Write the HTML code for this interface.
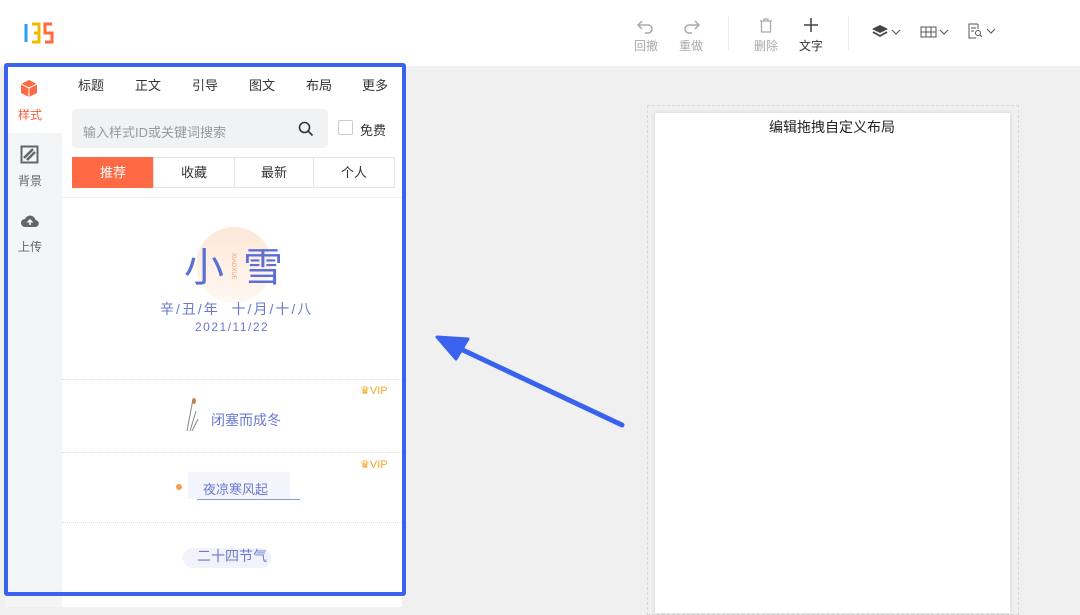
<!DOCTYPE html>
<html><head><meta charset="utf-8"><style>
*{margin:0;padding:0;box-sizing:border-box}
body{width:1080px;height:607px;overflow:hidden;background:#f0f0f0;font-family:"Liberation Sans","Noto Sans CJK SC",sans-serif;position:relative;font-size:13px;color:#333}
.top{position:absolute;left:0;top:0;width:1080px;height:66px;background:#fff}
.abs{position:absolute}
.tb{position:absolute;text-align:center;font-size:12px;color:#aaa;width:30px}
.side{position:absolute;left:6px;top:66px;width:56px;height:541px;background:#f4f5f7}
.panel{position:absolute;left:62px;top:66px;width:340px;height:541px;background:#fff}
.tabs span{position:absolute;top:75px;font-size:13px;color:#333}
.seg{position:absolute;top:157px;height:31px;border:1px solid #e3e3e3;text-align:center;line-height:29px;font-size:13px;color:#333}
.sep{position:absolute;left:62px;width:340px;border-top:1px dotted #e0e0e0}
.vip{position:absolute;left:360px;font-size:11px;color:#f5a623}
</style></head><body>
<div class="top"></div>
<svg class="abs" style="left:23px;top:22px" width="32" height="22" viewBox="0 0 32 22" fill="none" stroke-width="3"><path d="M3 2V20" stroke="#2a9df4"/><path d="M9 2H16V11H11M16 11V20H9" stroke="#f5b800"/><path d="M29 2H22V11H29V20H22" stroke="#ff6a3c"/></svg>
<!-- toolbar -->
<svg class="abs" style="left:636px;top:18px" width="20" height="16" viewBox="0 0 20 16" fill="none" stroke="#aaa" stroke-width="1.5"><path d="M6 3 L2 7 L6 11 M2 7 H12 a4 4 0 0 1 0 8 H9"/></svg>
<div class="tb" style="left:631px;top:37px">回撤</div>
<svg class="abs" style="left:681px;top:18px" width="20" height="16" viewBox="0 0 20 16" fill="none" stroke="#aaa" stroke-width="1.5"><path d="M14 3 L18 7 L14 11 M18 7 H8 a4 4 0 0 0 0 8 H11"/></svg>
<div class="tb" style="left:676px;top:37px">重做</div>
<div class="abs" style="left:728px;top:16px;width:1px;height:34px;background:#eee"></div>
<svg class="abs" style="left:758px;top:17px" width="16" height="17" viewBox="0 0 16 17" fill="none" stroke="#aaa" stroke-width="1.3"><path d="M2 4H14M6 4V2H10V4M3.5 4V15H12.5V4"/></svg>
<div class="tb" style="left:751px;top:37px">删除</div>
<svg class="abs" style="left:803px;top:17px" width="16" height="16" viewBox="0 0 16 16" stroke="#444" stroke-width="1.5"><path d="M8 1V15M1 8H15"/></svg>
<div class="tb" style="left:796px;top:37px;color:#333">文字</div>
<div class="abs" style="left:848px;top:16px;width:1px;height:34px;background:#eee"></div>
<svg class="abs" style="left:872px;top:24px" width="30" height="16" viewBox="0 0 30 16"><path d="M8 1L16 5L8 9L0 5Z" fill="#444"/><path d="M1 8L8 12L15 8" stroke="#444" stroke-width="1.8" fill="none"/><path d="M20 6L24 10L28 6" stroke="#555" fill="none"/></svg>
<svg class="abs" style="left:920px;top:25px" width="30" height="14" viewBox="0 0 30 14" fill="none" stroke="#555"><rect x="1" y="2" width="15" height="10"/><path d="M1 7H16M6 2V12M11 2V12M20 5L24 9L28 5"/></svg>
<svg class="abs" style="left:968px;top:23px" width="30" height="16" viewBox="0 0 30 16" fill="none" stroke="#555"><path d="M10 1H1V15H8M10 1V6M3 5H8M3 8H6"/><circle cx="10" cy="10" r="2.5"/><path d="M12 12L14 14M19 6L23 10L27 6"/></svg>
<!-- canvas -->
<div class="abs" style="left:647px;top:105px;width:372px;height:510px;border:1px dashed #d8d8d8"></div>
<div class="abs" style="left:655px;top:113px;width:355px;height:500px;background:#fff;box-shadow:0 0 4px rgba(0,0,0,.15)"></div>
<div class="abs" style="left:655px;top:117px;width:300px;text-align:center;font-size:14px;color:#222;left:682px">编辑拖拽自定义布局</div>
<!-- left -->
<div class="side"></div>
<div class="abs" style="left:6px;top:66px;width:56px;height:67px;background:#fff"></div>
<svg class="abs" style="left:20px;top:79px" width="18" height="19" viewBox="0 0 18 19"><path d="M9 1L17 5V14L9 18L1 14V5Z" fill="#ff6a45"/><path d="M1 5L9 9L17 5M9 9V18" stroke="#fff" stroke-width="1" fill="none"/></svg>
<div class="abs" style="left:18px;top:106px;font-size:12px;color:#ff5a3c">样式</div>
<svg class="abs" style="left:20px;top:145px" width="19" height="19" viewBox="0 0 19 19" fill="none" stroke="#666" stroke-width="2"><rect x="1.5" y="1.5" width="16" height="16"/><path d="M4 13L13 4M7 15L15 7" stroke-width="2.5"/></svg>
<div class="abs" style="left:18px;top:172px;font-size:12px;color:#666">背景</div>
<svg class="abs" style="left:20px;top:213px" width="20" height="15" viewBox="0 0 20 15"><path d="M5 14a4 4 0 0 1 0-8a5.5 5.5 0 0 1 10.5 1a3.5 3.5 0 0 1-.5 7Z" fill="#666"/><path d="M10 12V7M7.5 9.5L10 7L12.5 9.5" stroke="#fff" stroke-width="1.5" fill="none"/></svg>
<div class="abs" style="left:18px;top:238px;font-size:12px;color:#666">上传</div>
<div class="panel"></div>
<div class="tabs"><span style="left:78px">标题</span><span style="left:135px">正文</span><span style="left:192px">引导</span><span style="left:249px">图文</span><span style="left:306px">布局</span><span style="left:362px">更多</span></div>
<div class="abs" style="left:72px;top:109px;width:256px;height:39px;background:#f1f2f4;border-radius:4px"></div>
<div class="abs" style="left:83px;top:122px;font-size:13px;color:#999">输入样式ID或关键词搜索</div>
<svg class="abs" style="left:298px;top:121px" width="16" height="16" viewBox="0 0 16 16" fill="none" stroke="#333" stroke-width="1.6"><circle cx="6.5" cy="6.5" r="5"/><path d="M10 10L14.5 14.5"/></svg>
<div class="abs" style="left:338px;top:120px;width:15px;height:15px;border:1px solid #ccc;border-radius:2px"></div>
<div class="abs" style="left:360px;top:120px;font-size:13px">免费</div>
<div class="seg" style="left:72px;width:82px;background:#ff6a45;border-color:#ff6a45;color:#fff">推荐</div>
<div class="seg" style="left:153px;width:82px">收藏</div>
<div class="seg" style="left:234px;width:80px">最新</div>
<div class="seg" style="left:313px;width:82px">个人</div>
<div class="abs" style="left:62px;top:197px;width:340px;border-top:1px solid #eee"></div>
<div class="abs" style="left:196px;top:227px;width:76px;height:76px;border-radius:50%;background:linear-gradient(#fde8d8,#fff8f2)"></div>
<div class="abs" style="left:184px;top:244px;font-size:40px;color:#5b6fd6;line-height:48px">小</div>
<div class="abs" style="left:243px;top:244px;font-size:40px;color:#5b6fd6;line-height:48px">雪</div>
<div class="abs" style="left:230px;top:253px;font-size:6px;color:#f0a070;writing-mode:vertical-rl">XIAOXUE</div>
<div class="abs" style="left:160px;top:299px;font-size:14px;color:#6a78d0;letter-spacing:2px;white-space:pre">辛/丑/年  十/月/十/八</div>
<div class="abs" style="left:195px;top:320px;font-size:12px;color:#6a78d0;letter-spacing:1.5px">2021/11/22</div>
<div class="sep" style="top:379px"></div>
<div class="vip" style="top:384px">♛VIP</div>
<svg class="abs" style="left:183px;top:397px" width="22" height="36" viewBox="0 0 22 36" stroke="#888" fill="none"><path d="M10 2L4 34M13 14L7 34M15 22L9 34"/><ellipse cx="11" cy="4" rx="2" ry="3" fill="#b9884a" stroke="none"/></svg>
<div class="abs" style="left:211px;top:410px;font-size:14px;color:#6a78d0">闭塞而成冬</div>
<div class="sep" style="top:452px"></div>
<div class="vip" style="top:458px">♛VIP</div>
<div class="abs" style="left:176px;top:484px;width:6px;height:6px;border-radius:50%;background:#f5a050"></div>
<div class="abs" style="left:188px;top:472px;width:102px;height:27px;background:#f3f4fc"></div>
<div class="abs" style="left:197px;top:499px;width:103px;border-top:1px solid #8a98e0"></div>
<div class="abs" style="left:203px;top:479px;font-size:13px;color:#6a78d0">夜凉寒风起</div>
<div class="sep" style="top:522px"></div>
<div class="abs" style="left:183px;top:548px;width:88px;height:20px;border-radius:10px;background:#f1f2fa"></div>
<div class="abs" style="left:197px;top:546px;font-size:14px;color:#6a78d0">二十四节气</div>
<!-- blue frame -->
<div class="abs" style="left:4px;top:63px;width:402px;height:533px;border:4px solid #3a62ee;border-radius:3px"></div>
<!-- arrow -->
<svg class="abs" style="left:430px;top:328px" width="200" height="105" viewBox="430 328 200 105"><path d="M622 425L450 344" stroke="#3a62ee" stroke-width="5" stroke-linecap="round"/><path d="M437 337L468 339L456 359Z" fill="#3a62ee" stroke="#3a62ee" stroke-width="3" stroke-linejoin="round"/></svg>
</body></html>
